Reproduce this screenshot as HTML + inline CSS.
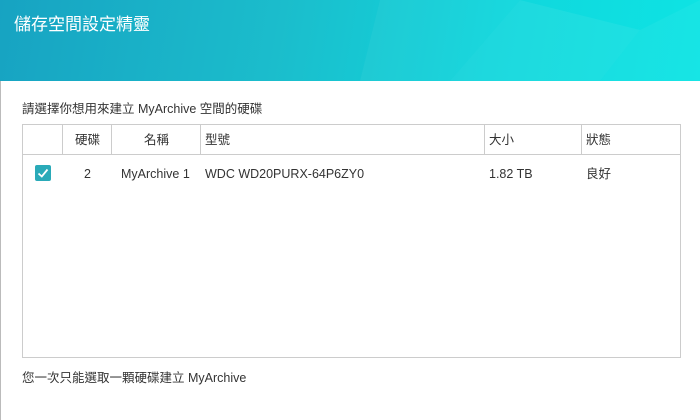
<!DOCTYPE html>
<html><head><meta charset="utf-8"><style>
*{margin:0;padding:0;box-sizing:border-box}
body{width:700px;height:420px;overflow:hidden;background:#fff;font-family:"Liberation Sans","Noto Sans CJK TC",sans-serif;color:#333;position:relative}
.lb{position:absolute;left:0;top:0;width:1px;height:420px;background:#bbb}
.hd{position:absolute;left:0;top:0;width:700px;height:81px;background:linear-gradient(100deg,#17a3c2 0%,#1bbdcc 40%,#10d6dc 70%,#0ee4e4 100%);overflow:hidden}
.hd .t{position:absolute;left:14px;top:10px;color:#fff;font-size:17px}
.hd svg{position:absolute;left:0;top:0}
.p{position:absolute;font-size:12.5px;color:#333}
.tb{position:absolute;left:22px;top:124px;width:659px;height:234px;border:1px solid #ccc}
.hr{position:absolute;left:0;top:0;width:100%;height:30px;border-bottom:1px solid #ccc}
.vl{position:absolute;top:0;width:1px;height:30px;background:#ccc}
.c{position:absolute;font-size:12.5px;color:#333;line-height:14px}
.cb{position:absolute;left:12px;top:40px;width:16px;height:16px;background:#2aaab8;border-radius:2px}
</style></head><body>
<div class="lb"></div>
<div class="hd">
<svg width="700" height="81"><polygon points="380,0 520,0 450,81 360,81" fill="#fff" opacity=".04"/><polygon points="520,0 640,30 600,81 450,81" fill="#fff" opacity=".06"/><polygon points="640,30 700,0 700,81 600,81" fill="#fff" opacity=".04"/></svg>
<div class="t">儲存空間設定精靈</div></div>
<div class="p" style="left:22px;top:98px">請選擇你想用來建立 MyArchive 空間的硬碟</div>
<div class="tb">
<div class="hr"></div>
<div class="vl" style="left:39px"></div><div class="vl" style="left:88px"></div><div class="vl" style="left:177px"></div><div class="vl" style="left:461px"></div><div class="vl" style="left:558px"></div>
<div class="c" style="left:52px;top:8px">硬碟</div>
<div class="c" style="left:121px;top:8px">名稱</div>
<div class="c" style="left:182px;top:8px">型號</div>
<div class="c" style="left:466px;top:8px">大小</div>
<div class="c" style="left:563px;top:8px">狀態</div>
<div class="cb"><svg width="16" height="16"><path d="M3.5 8.5 L6.8 11.5 L12.5 4.5" stroke="#fff" stroke-width="1.8" fill="none"/></svg></div>
<div class="c" style="left:61px;top:42px">2</div>
<div class="c" style="left:98px;top:42px">MyArchive 1</div>
<div class="c" style="left:182px;top:42px">WDC WD20PURX-64P6ZY0</div>
<div class="c" style="left:466px;top:42px">1.82 TB</div>
<div class="c" style="left:563px;top:42px">良好</div>
</div>
<div class="p" style="left:22px;top:367px">您一次只能選取一顆硬碟建立 MyArchive</div>
</body></html>
